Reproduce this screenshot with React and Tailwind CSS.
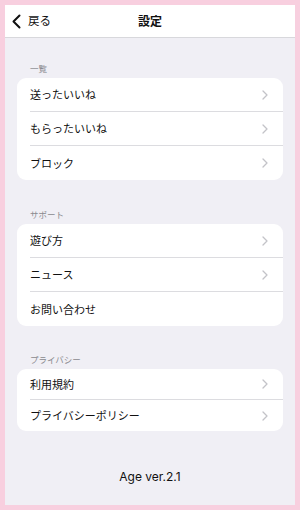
import React from 'react'

const Chevron = () => (
  <svg width="6" height="10" viewBox="0 0 6 10" className="shrink-0">
    <path d="M1 1l4 4-4 4" fill="none" stroke="#c3c3c8" strokeWidth="1.3" strokeLinecap="round" strokeLinejoin="round" />
  </svg>
)

const Row = ({ label, last, arrow = true, h }) => (
  <div className={`flex items-center pl-[13px] ${h}`}>
    <div className={`flex h-full flex-1 items-center justify-between pr-[15px] ${last ? '' : 'border-b border-[#dcdce0]'}`}>
      <span className="text-[11px] text-[#111]">{label}</span>
      {arrow && <Chevron />}
    </div>
  </div>
)

const Section = ({ title, items, mt, h }) => (
  <div className={mt}>
    <p className="pl-[13px] text-[8.5px] leading-[12px] text-[#8a8a8f]">{title}</p>
    <div className="mt-[4px] overflow-hidden rounded-[9px] bg-white">
      {items.map((it, i) => (
        <Row key={it.label} label={it.label} arrow={it.arrow !== false} last={i === items.length - 1} h={h} />
      ))}
    </div>
  </div>
)

export default function App() {
  return (
    <div
      className="h-[510px] w-[300px] border-[5px] border-[#f8cfdf] bg-[#f0eff5]"
      style={{ fontFamily: '"Noto Sans CJK JP", "Noto Sans", sans-serif' }}
    >
      <div className="relative flex h-[33px] items-center justify-center border-b border-[#d8d8dc] bg-white">
        <div className="absolute left-[6px] top-0 flex h-full items-center gap-[6px]">
          <svg width="11" height="15" viewBox="0 0 11 15">
            <path d="M8.5 1.5L2.5 7.5l6 6" fill="none" stroke="#111" strokeWidth="2" strokeLinecap="round" strokeLinejoin="round" />
          </svg>
          <span className="text-[11.5px] text-[#111]">戻る</span>
        </div>
        <h1 className="text-[12px] font-bold text-[#111]">設定</h1>
      </div>

      <div className="px-[12px]">
        <Section
          title="一覧"
          mt="mt-[24px]"
          h="h-[34px]"
          items={[{ label: '送ったいいね' }, { label: 'もらったいいね' }, { label: 'ブロック' }]}
        />
        <Section
          title="サポート"
          mt="mt-[28px]"
          h="h-[34px]"
          items={[{ label: '遊び方' }, { label: 'ニュース' }, { label: 'お問い合わせ', arrow: false }]}
        />
        <Section
          title="プライバシー"
          mt="mt-[27px]"
          h="h-[31px]"
          items={[{ label: '利用規約' }, { label: 'プライバシーポリシー' }]}
        />
        <p
          className="mt-[38px] text-center text-[12px] leading-[16px] text-[#111]"
          style={{ fontFamily: 'Inter, "Noto Sans", sans-serif' }}
        >
          Age ver.2.1
        </p>
      </div>
    </div>
  )
}
